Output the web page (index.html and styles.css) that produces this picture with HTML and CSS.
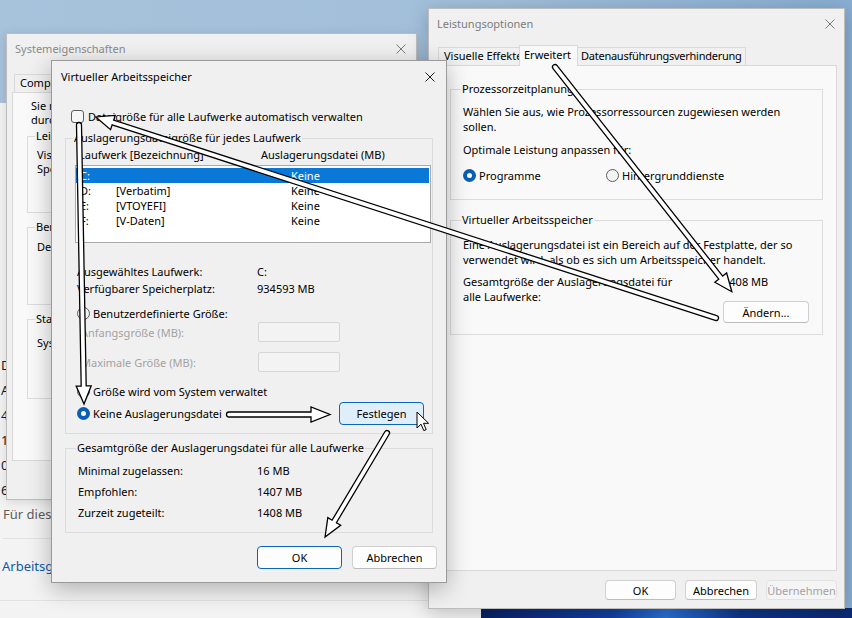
FILE: index.html
```html
<!DOCTYPE html>
<html lang="de">
<head>
<meta charset="utf-8">
<title>Virtueller Arbeitsspeicher</title>
<link rel="stylesheet" href="styles.css">
</head>
<body>
<div class="wallpaper"></div>

<div class="settings">
  <div class="set-list">
    <span>D</span><span>A</span><span>4</span><span>1</span><span>0</span><span>6</span>
  </div>
  <div class="set-note">Für diese</div>
  <div class="set-link">Arbeitsgruppe</div>
</div>

<div class="win sys">
  <div class="titlebar">
    <span class="title">Systemeigenschaften</span>
    <svg class="x" width="10" height="10" viewBox="0 0 10 10"><path d="M0.5 0.5L9.5 9.5M9.5 0.5L0.5 9.5"/></svg>
  </div>
  <div class="tabs sys-tabs">
    <span class="tab clip-tab">Compu</span>
  </div>
  <div class="page sys-page">
    <p class="intro clip">Sie m<br>durc</p>
    <fieldset class="grp sg1"><legend>Leis</legend><p class="clip">Visu<br>Spe</p></fieldset>
    <fieldset class="grp sg2"><legend>Ben</legend><p class="clip">Des</p></fieldset>
    <fieldset class="grp sg3"><legend>Sta</legend><p class="clip">Sys</p></fieldset>
  </div>
</div>

<div class="win perf">
  <div class="titlebar">
    <span class="title">Leistungsoptionen</span>
    <svg class="x" width="10" height="10" viewBox="0 0 10 10"><path d="M0.5 0.5L9.5 9.5M9.5 0.5L0.5 9.5"/></svg>
  </div>
  <div class="tabs perf-tabs">
    <span class="tab t1">Visuelle Effekte</span><span class="tab on t2">Erweitert</span><span class="tab t3">Datenausführungsverhinderung</span>
  </div>
  <div class="page perf-page">
    <fieldset class="grp pg1">
      <legend>Prozessorzeitplanung</legend>
      <p class="lines">Wählen Sie aus, wie Prozessorressourcen zugewiesen werden<br>sollen.</p>
      <p class="lines opt">Optimale Leistung anpassen für:</p>
      <div class="radios">
        <span class="radio-item w143"><span class="radio on"></span>Programme</span>
        <span class="radio-item"><span class="radio"></span>Hintergrunddienste</span>
      </div>
    </fieldset>
    <fieldset class="grp pg2">
      <legend>Virtueller Arbeitsspeicher</legend>
      <p class="lines">Eine Auslagerungsdatei ist ein Bereich auf der Festplatte, der so<br>verwendet wird, als ob es sich um Arbeitsspeicher handelt.</p>
      <div class="total">
        <p class="lines total-label">Gesamtgröße der Auslagerungsdatei für<br>alle Laufwerke:</p>
        <div class="total-right">
          <span class="lines">1408 MB</span>
          <span class="btn change">Ändern...</span>
        </div>
      </div>
    </fieldset>
  </div>
  <div class="btnrow perf-btns">
    <span class="btn pb">OK</span><span class="btn pb">Abbrechen</span><span class="btn pb dis">Übernehmen</span>
  </div>
</div>

<div class="win vm">
  <div class="titlebar">
    <span class="title">Virtueller Arbeitsspeicher</span>
    <svg class="x" width="10" height="10" viewBox="0 0 10 10"><path d="M0.5 0.5L9.5 9.5M9.5 0.5L0.5 9.5"/></svg>
  </div>
  <div class="vm-body">
    <div class="check-row"><span class="checkbox"></span>Dateigröße für alle Laufwerke automatisch verwalten</div>
    <fieldset class="grp vg1">
      <legend>Auslagerungsdateigröße für jedes Laufwerk</legend>
      <div class="list-head"><span>Laufwerk [Bezeichnung]</span><span>Auslagerungsdatei (MB)</span></div>
      <div class="listbox">
        <div class="lrow sel"><span>C:</span><span></span><span>Keine</span></div>
        <div class="lrow"><span>D:</span><span>[Verbatim]</span><span>Keine</span></div>
        <div class="lrow"><span>E:</span><span>[VTOYEFI]</span><span>Keine</span></div>
        <div class="lrow"><span>F:</span><span>[V-Daten]</span><span>Keine</span></div>
      </div>
      <div class="kv first"><span>Ausgewähltes Laufwerk:</span><span>C:</span></div>
      <div class="kv"><span>Verfügbarer Speicherplatz:</span><span>934593 MB</span></div>
      <div class="radio-row r1"><span class="radio"></span>Benutzerdefinierte Größe:</div>
      <div class="field-row"><span class="dim">Anfangsgröße (MB):</span><span class="input"></span></div>
      <div class="field-row f2"><span class="dim">Maximale Größe (MB):</span><span class="input"></span></div>
      <div class="radio-row r3"><span class="radio"></span>Größe wird vom System verwaltet</div>
      <div class="set-row">
        <span class="radio-item"><span class="radio on"></span>Keine Auslagerungsdatei</span>
        <span class="btn festlegen">Festlegen</span>
      </div>
    </fieldset>
    <fieldset class="grp vg2">
      <legend>Gesamtgröße der Auslagerungsdatei für alle Laufwerke</legend>
      <div class="kv2"><span>Minimal zugelassen:</span><span>16 MB</span></div>
      <div class="kv2"><span>Empfohlen:</span><span>1407 MB</span></div>
      <div class="kv2"><span>Zurzeit zugeteilt:</span><span>1408 MB</span></div>
    </fieldset>
    <div class="btnrow vm-btns">
      <span class="btn vb default">OK</span><span class="btn vb">Abbrechen</span>
    </div>
  </div>
</div>

<svg class="arrows" width="852" height="618" viewBox="0 0 852 618">
  <g transform="translate(555 67) rotate(51.8)"><path d="M0,-2.5 H268 V-7.5 L286,0 L268,7.5 V2.5 H0 A2.5,2.5 0 0 1 0,-2.5 Z"/></g>
  <g transform="translate(716 318) rotate(197.96)"><path d="M0,-2.5 H634 V-7.5 L652,0 L634,7.5 V2.5 H0 A2.5,2.5 0 0 1 0,-2.5 Z"/></g>
  <g transform="translate(79 125) rotate(88.97)"><path d="M0,-2.5 H261 V-7.5 L279,0 L261,7.5 V2.5 H0 A2.5,2.5 0 0 1 0,-2.5 Z"/></g>
  <g transform="translate(229 414.5)"><path d="M0,-2.5 H82 V-7.5 L101,0 L82,7.5 V2.5 H0 A2.5,2.5 0 0 1 0,-2.5 Z"/></g>
  <g transform="translate(387 433) rotate(120.8)"><path d="M0,-2.5 H103 V-7.5 L121,0 L103,7.5 V2.5 H0 A2.5,2.5 0 0 1 0,-2.5 Z"/></g>
</svg>

<svg class="cursor" width="14" height="22" viewBox="0 0 14 22">
  <path d="M1 1 V17 L5 13.2 L7.8 19.6 L10.2 18.6 L7.5 12.3 L12.6 12.3 Z"/>
</svg>
</body>
</html>
```

FILE: styles.css
```css
* { box-sizing: border-box; }
html, body { margin: 0; padding: 0; }
body {
  width: 852px;
  height: 618px;
  overflow: hidden;
  position: relative;
  background: linear-gradient(90deg, #a7c2db 0%, #a2bfda 55%, #88aed2 100%);
  font-family: "Noto Sans", "Open Sans", sans-serif;
  font-size: 11px;
  color: #000;
}
p { margin: 0; }

.wallpaper {
  position: absolute;
  left: 481px; top: 608px; right: 0; bottom: 0;
  background: linear-gradient(100deg, #0a2163 0%, #123f9e 35%, #2a6fd6 50%, #0e3587 70%, #0b2a73 100%);
}

/* Settings window behind */
.settings {
  position: absolute;
  z-index: 1;
  left: 0; top: 103px;
  width: 481px; height: 515px;
  background: #f3f3f3;
  font-size: 13px;
  color: #1b1b1b;
}
.set-list { display: flex; flex-direction: column; padding: 250px 0 0 1px; }
.set-list span { line-height: 25px; height: 25px; }
.set-note {
  margin: 0 0 0 3px;
  line-height: 22px;
  color: #5d5d5d;
  white-space: nowrap;
  padding-bottom: 13px;
  border-bottom: 1px solid #e2e2e2;
}
.set-link {
  margin-top: 16px;
  padding-left: 2px;
  line-height: 22px;
  color: #0d5aa8;
  padding-bottom: 23px;
  border-bottom: 1px solid #e2e2e2;
}

/* Generic window */
.win {
  position: absolute;
  background: #f0f0f0;
  border: 1px solid #bdbdbd;
  display: flex;
  flex-direction: column;
}
.titlebar {
  display: flex;
  align-items: center;
  justify-content: space-between;
  flex: none;
}
.title { white-space: nowrap; }
.x path { stroke: #7a7a7a; stroke-width: 1; fill: none; }

.sys {
  z-index: 2;
  left: 6px; top: 33px; width: 411px; height: 467px;
  box-shadow: 0 2px 10px rgba(0,0,0,0.12);
}
.sys .titlebar { height: 29px; padding: 0 10px 0 8px; }
.sys .title { color: #8a8a8a; }

.perf {
  z-index: 3;
  left: 428px; top: 8px; width: 417px; height: 601px;
  box-shadow: 0 4px 18px rgba(0,0,0,0.22);
}
.perf .titlebar { height: 29px; padding: 0 9px 0 8px; }
.perf .title { color: #7c7c7c; }

.vm {
  z-index: 4;
  left: 51px; top: 60px; width: 396px; height: 523px;
  border-color: #9a9a9a;
  box-shadow: 0 6px 22px rgba(0,0,0,0.28);
}
.vm .titlebar { height: 31px; padding: 0 11px 0 9px; }
.vm .x path { stroke: #1a1a1a; }

/* Tabs */
.tabs { display: flex; align-items: flex-end; flex: none; position: relative; z-index: 1; }
.tab {
  height: 18px;
  line-height: 16px;
  padding: 0 5px;
  border: 1px solid #d9d9d9;
  border-bottom: none;
  background: #f0f0f0;
  white-space: nowrap;
  margin-right: -1px;
}
.tab.on { background: #f9f9f9; margin-bottom: -1px; height: 21px; line-height: 17px; }
.page {
  background: #f9f9f9;
  border: 1px solid #d9d9d9;
  flex: none;
}

.sys-tabs { margin: 10px 0 0 7px; height: 19px; }
.clip-tab { width: 80px; }
.sys-page { margin: 0 5px 0 5px; height: 369px; padding: 6px 14px 0 14px; }
.intro { line-height: 14px; padding-left: 4px; white-space: nowrap; }
.clip { white-space: nowrap; }
.sys-page legend { min-width: 40px; }

.perf-tabs { margin: 8px 0 0 9px; height: 19px; }
.perf-tabs .t1 { width: 82px; }
.perf-tabs .t2 { width: 59px; padding: 0 4px; }
.perf-tabs .t3 { padding: 0 3px; letter-spacing: -0.25px; }
.perf-page { margin: 0 7px; height: 506px; padding: 15px 13px 0 13px; }

/* Group boxes */
fieldset.grp {
  margin: 0;
  border: 1px solid #dcdcdc;
  min-width: 0;
}
fieldset.grp legend {
  padding: 0 1px;
  margin-left: -2px;
  line-height: 16px;
  height: 16px;
  white-space: nowrap;
}

.sg1 { margin-top: 1px !important; height: 85px; padding: 4px 9px 0 9px; }
.sg2 { margin-top: 6px !important; height: 86px; padding: 5px 9px 0 9px; }
.sg3 { margin-top: 6px !important; height: 88px; padding: 9px 9px 0 9px; }
.sys-page p { line-height: 14px; }

.lines { line-height: 15px; white-space: nowrap; }
.pg1 { padding: 7px 12px 15px 12px; }
.pg1 legend, .pg2 legend { margin-left: -5px; }
.pg1 .opt { margin-top: 8px; }
.radios { display: flex; margin-top: 10px; height: 17px; align-items: center; }
.radio-item { display: inline-flex; align-items: center; gap: 3px; white-space: nowrap; }
.w143 { width: 143px; }
.pg2 { margin-top: 12px !important; padding: 9px 12px 11px 12px; }
.total { display: flex; margin-top: 7px; }
.total-label { width: 260px; }
.total-right { display: flex; flex-direction: column; align-items: flex-start; width: 86px; }
.change { margin-top: 12px; width: 86px; height: 22px; }

/* Buttons */
.btn {
  display: inline-flex;
  align-items: center;
  justify-content: center;
  background: #fdfdfd;
  border: 1px solid #d0d0d0;
  border-bottom-color: #bcbcbc;
  border-radius: 4px;
  white-space: nowrap;
}
.btnrow { display: flex; justify-content: flex-end; }
.perf-btns { margin-top: 9px; padding-right: 7px; gap: 9px; }
.pb { width: 71px; height: 20px; }
.pb:nth-child(2) { width: 72px; }
.dis { color: #a3a3a3; background: #f5f5f5; border-color: #e3e3e3; }

.vm-btns { margin-top: 13px; margin-right: -4px; gap: 10px; }
.vb { width: 85px; height: 23px; }
.default { border-color: #0a64b8; }
.festlegen {
  width: 85px; height: 23px;
  background: #e0eefa;
  border-color: #0a64b8;
  margin-right: 7px;
}

/* Controls */
.radio {
  width: 13px; height: 13px;
  border-radius: 50%;
  border: 1px solid #5d5d5d;
  background: #f4f4f4;
  flex: none;
}
.radio.on {
  border: 4px solid #0a5fb4;
  background: #fff;
}
.checkbox {
  width: 13px; height: 13px;
  border: 1px solid #5d5d5d;
  border-radius: 3px;
  background: #f7f7f7;
  flex: none;
}

/* VM dialog body */
.vm-body { padding: 0 13px; display: flex; flex-direction: column; }
.check-row {
  display: flex; align-items: center; gap: 4px;
  margin: 18px 0 0 6px;
  height: 13px;
  white-space: nowrap;
}
.vg1 { margin-top: 7px !important; padding: 2px 1px 8px 9px; }
.vg1 legend { margin-left: -3px; }
.list-head {
  display: grid;
  grid-template-columns: 182px 1fr;
  padding-left: 4px;
  line-height: 14px;
  height: 14px;
  white-space: nowrap;
}
.listbox {
  margin-top: 3px;
  height: 78px;
  background: #fff;
  border: 1px solid #a9a9a9;
  padding-top: 2px;
}
.lrow {
  display: grid;
  grid-template-columns: 36px 175px 1fr;
  height: 15px;
  line-height: 15px;
  padding-left: 4px;
  white-space: nowrap;
}
.lrow.sel { background: #0a78d7; color: #fff; margin-right: 1px; }
.kv {
  display: grid;
  grid-template-columns: 180px 1fr;
  padding-left: 2px;
  line-height: 17px;
  height: 17px;
  white-space: nowrap;
}
.kv.first { margin-top: 20px; }
.radio-row {
  display: flex; align-items: center; gap: 3px;
  padding-left: 2px;
  height: 17px;
  white-space: nowrap;
}
.r1 { margin-top: 8px; }
.r3 { margin-top: 11px; }
.field-row {
  display: grid;
  grid-template-columns: 181px 82px;
  padding-left: 2px;
  height: 20px;
  align-items: center;
  white-space: nowrap;
}
.field-row.f2 { margin-top: 10px; }
.dim { color: #a2a2a2; padding-left: 4px; }
.input { height: 20px; border: 1px solid #d6d6d6; background: #f3f3f3; border-radius: 2px; }
.set-row {
  display: flex;
  justify-content: space-between;
  align-items: center;
  margin-top: 2px;
  padding-left: 2px;
  height: 23px;
}
.vg2 { margin-top: 6px !important; padding: 4px 1px 9px 12px; }
.vg2 legend { margin-left: -6px; }
.kv2 {
  display: grid;
  grid-template-columns: 179px 1fr;
  height: 21px;
  line-height: 21px;
  white-space: nowrap;
}

/* Overlays */
.arrows { position: absolute; z-index: 5; left: 0; top: 0; pointer-events: none; }
.arrows path { fill: #fff; stroke: #000; stroke-width: 1.3; stroke-linejoin: miter; }
.cursor { position: absolute; z-index: 6; left: 416px; top: 411px; }
.cursor path { fill: #fff; stroke: #000; stroke-width: 1; stroke-linejoin: round; }
```
